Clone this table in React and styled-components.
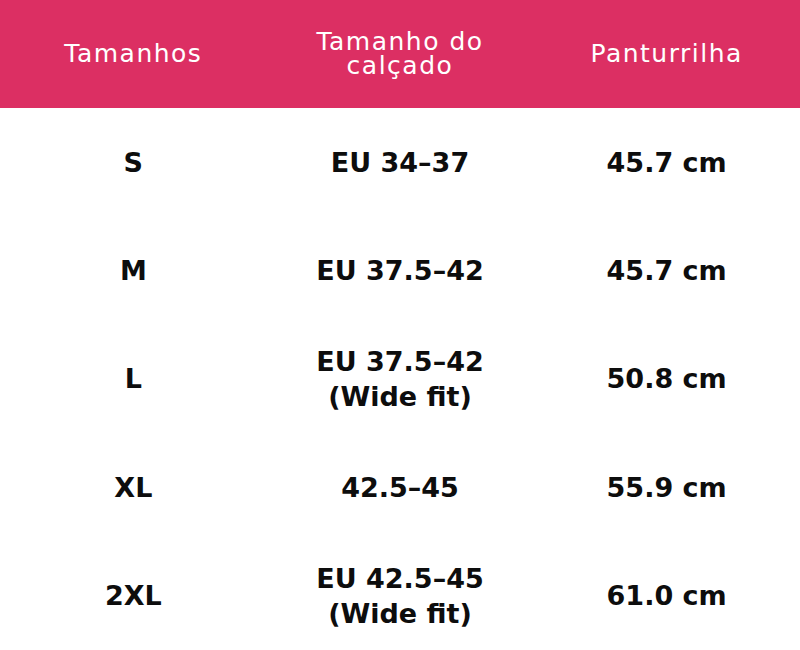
import React from "react";
import styled, { createGlobalStyle } from "styled-components";

const Global = createGlobalStyle`
  html, body { margin: 0; padding: 0; background: #ffffff; }
  body { font-family: "DejaVu Sans", "Open Sans", sans-serif; }
`;

const Table = styled.div`
  width: 800px;
  display: flex;
  flex-direction: column;
`;

const HeaderRow = styled.div`
  display: grid;
  grid-template-columns: repeat(3, 1fr);
  height: 108px;
  background: #dc2f63;
  align-items: center;
`;

const HeadCell = styled.div`
  color: #ffffff;
  font-family: "DejaVu Sans", sans-serif;
  font-size: 25px;
  font-weight: 400;
  line-height: 24px;
  text-align: center;
  letter-spacing: 1.5px;
`;

const Row = styled.div`
  display: grid;
  grid-template-columns: repeat(3, 1fr);
  height: 108.4px;
  align-items: center;
`;

const Cell = styled.div`
  color: #0d0d0d;
  font-family: "DejaVu Sans", sans-serif;
  font-size: 27px;
  font-weight: 700;
  line-height: 35px;
  text-align: center;
`;

const rows = [
  ["S", ["EU 34–37"], "45.7 cm"],
  ["M", ["EU 37.5–42"], "45.7 cm"],
  ["L", ["EU 37.5–42", "(Wide fit)"], "50.8 cm"],
  ["XL", ["42.5–45"], "55.9 cm"],
  ["2XL", ["EU 42.5–45", "(Wide fit)"], "61.0 cm"],
];

export default function App() {
  return (
    <>
      <Global />
      <Table>
        <HeaderRow>
          <HeadCell>Tamanhos</HeadCell>
          <HeadCell>Tamanho do<br />calçado</HeadCell>
          <HeadCell>Panturrilha</HeadCell>
        </HeaderRow>
        {rows.map(([size, shoe, calf]) => (
          <Row key={size}>
            <Cell>{size}</Cell>
            <Cell>
              {shoe.map((l, i) => (
                <div key={i}>{l}</div>
              ))}
            </Cell>
            <Cell>{calf}</Cell>
          </Row>
        ))}
      </Table>
    </>
  );
}
